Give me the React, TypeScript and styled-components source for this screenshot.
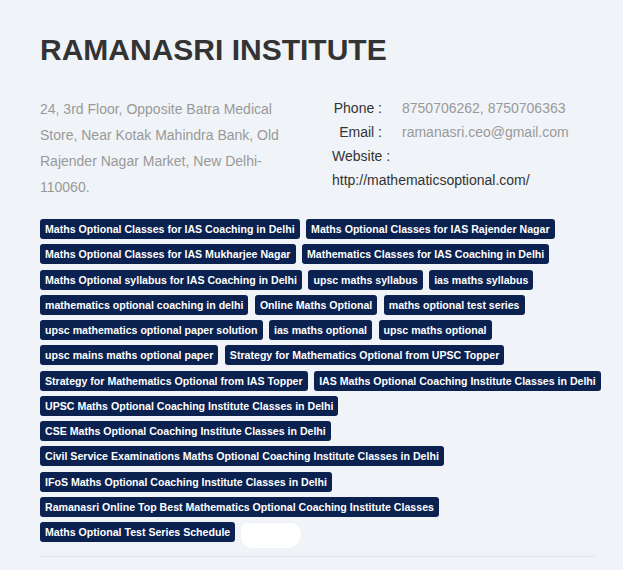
import React from "react";
import styled, { createGlobalStyle } from "styled-components";

const Global = createGlobalStyle`
  html, body { margin: 0; padding: 0; background: #f0f4f8; }
  body { font-family: "Liberation Sans", Arial, sans-serif; }
`;

const Page = styled.div`
  padding: 33px 0 0 40px;
  width: 583px;
  box-sizing: border-box;
`;

const Title = styled.h1`
  margin: 0;
  font-size: 30px;
  font-weight: 700;
  color: #333;
  line-height: 34px;
`;

const Info = styled.div`
  display: flex;
  margin-top: 29px;
`;

const Address = styled.p`
  margin: 0;
  width: 260px;
  font-size: 14px;
  line-height: 26px;
  color: #999;
`;

const Contact = styled.div`
  margin-left: 32px;
  font-size: 14px;
  line-height: 24px;
  color: #333;
`;

const ContactRow = styled.div`
  display: grid;
  grid-template-columns: 50px auto;
  column-gap: 20px;
`;

const Label = styled.span`
  text-align: right;
`;

const Value = styled.span`
  color: #999;
`;

const Website = styled.div``;

const Tags = styled.div`
  display: flex;
  flex-wrap: wrap;
  gap: 5.25px 6.5px;
  margin-top: 19px;
  width: 562px;
`;

const Tag = styled.span`
  display: inline-block;
  background: #0b2150;
  color: #fff;
  font-size: 10.6px;
  font-weight: 700;
  line-height: 20px;
  height: 20px;
  padding: 0 5px;
  border-radius: 3px;
  white-space: nowrap;
`;

const Blob = styled.span`
  display: inline-block;
  width: 60px;
  height: 25px;
  margin: 1px 0 0 -1px;
  background: #fff;
  border-radius: 6px 10px 14px 12px;
`;

const Rule = styled.hr`
  margin: 8px 0 0;
  width: 555px;
  border: 0;
  border-top: 1px solid #dde3ea;
`;

const tags = [
  "Maths Optional Classes for IAS Coaching in Delhi",
  "Maths Optional Classes for IAS Rajender Nagar",
  "Maths Optional Classes for IAS Mukharjee Nagar",
  "Mathematics Classes for IAS Coaching in Delhi",
  "Maths Optional syllabus for IAS Coaching in Delhi",
  "upsc maths syllabus",
  "ias maths syllabus",
  "mathematics optional coaching in delhi",
  "Online Maths Optional",
  "maths optional test series",
  "upsc mathematics optional paper solution",
  "ias maths optional",
  "upsc maths optional",
  "upsc mains maths optional paper",
  "Strategy for Mathematics Optional from UPSC Topper",
  "Strategy for Mathematics Optional from IAS Topper",
  "IAS Maths Optional Coaching Institute Classes in Delhi",
  "UPSC Maths Optional Coaching Institute Classes in Delhi",
  "CSE Maths Optional Coaching Institute Classes in Delhi",
  "Civil Service Examinations Maths Optional Coaching Institute Classes in Delhi",
  "IFoS Maths Optional Coaching Institute Classes in Delhi",
  "Ramanasri Online Top Best Mathematics Optional Coaching Institute Classes",
  "Maths Optional Test Series Schedule",
];

export default function App() {
  return (
    <>
      <Global />
      <Page>
        <Title>RAMANASRI INSTITUTE</Title>
        <Info>
          <Address>
            24, 3rd Floor, Opposite Batra Medical Store, Near Kotak Mahindra
            Bank, Old Rajender Nagar Market, New Delhi-110060.
          </Address>
          <Contact>
            <ContactRow>
              <Label>Phone :</Label>
              <Value>8750706262, 8750706363</Value>
            </ContactRow>
            <ContactRow>
              <Label>Email :</Label>
              <Value>ramanasri.ceo@gmail.com</Value>
            </ContactRow>
            <Website>
              Website :
              <br />
              http://mathematicsoptional.com/
            </Website>
          </Contact>
        </Info>
        <Tags>
          {tags.map((t, i) => (
            <Tag key={i}>{t}</Tag>
          ))}
          <Blob />
        </Tags>
        <Rule />
      </Page>
    </>
  );
}
